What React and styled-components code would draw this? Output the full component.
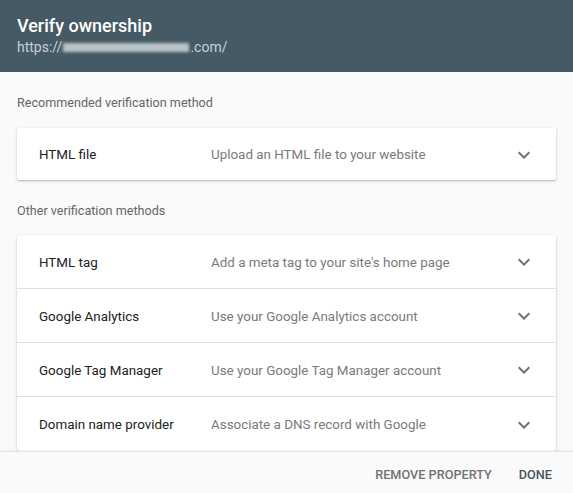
import React from "react";
import styled, { createGlobalStyle } from "styled-components";

const GlobalStyle = createGlobalStyle`
  html, body {
    margin: 0;
    padding: 0;
    background: #fafafa;
    font-family: Roboto, "Liberation Sans", Arial, sans-serif;
  }
`;

const Dialog = styled.div`
  width: 573px;
  height: 493px;
  display: flex;
  flex-direction: column;
  overflow: hidden;
  background: #fafafa;
`;

const Header = styled.header`
  height: 72px;
  flex-shrink: 0;
  box-sizing: border-box;
  padding: 15px 17px 0;
  background: #455a64;
`;

const Title = styled.h1`
  margin: 0;
  font-size: 18px;
  font-weight: 500;
  line-height: 22px;
  color: #ffffff;
`;

const Url = styled.div`
  display: flex;
  align-items: center;
  font-size: 14px;
  line-height: 20px;
  color: rgba(255, 255, 255, 0.72);
`;

const Blur = styled.span`
  display: inline-block;
  width: 126px;
  height: 9px;
  margin: 0 1px;
  background: #b9c3c8;
  filter: blur(1.5px);
`;

const Body = styled.main`
  flex: 1;
  overflow: hidden;
  padding: 0 17px;
`;

const SectionLabel = styled.div`
  font-size: 12.6px;
  line-height: 20px;
  color: #666666;
  margin: ${(p) => p.$top}px 0 ${(p) => p.$bottom}px;
`;

const Card = styled.div`
  background: #ffffff;
  border-radius: 2px;
  box-shadow: 0 1px 3px rgba(0, 0, 0, 0.22), 0 1px 1px rgba(0, 0, 0, 0.08);
`;

const Row = styled.div`
  box-sizing: border-box;
  display: grid;
  grid-template-columns: 172px 1fr 24px;
  align-items: center;
  height: ${(p) => p.$h}px;
  padding: 1px 20px 0 22px;
  border-bottom: ${(p) => (p.$last ? "none" : "1px solid #e0e0e0")};
`;

const Method = styled.span`
  font-size: 13.4px;
  color: #212121;
`;

const Desc = styled.span`
  font-size: 13.4px;
  color: #7a7a7a;
`;

const Chevron = styled.svg`
  width: 24px;
  height: 24px;
  fill: #707070;
`;

const Footer = styled.footer`
  box-sizing: border-box;
  height: 42px;
  flex-shrink: 0;
  display: flex;
  justify-content: flex-end;
  align-items: center;
  gap: 27px;
  padding: 3px 21px 0 0;
  background: #fafafa;
  border-top: 1px solid #e3e3e3;
  box-shadow: 0 -1px 2px rgba(0, 0, 0, 0.05);
  position: relative;
`;

const Button = styled.button`
  border: none;
  background: none;
  padding: 0;
  font-family: inherit;
  font-size: 12.7px;
  font-weight: 500;
  text-transform: uppercase;
  color: ${(p) => (p.$primary ? "#46555d" : "#727272")};
  cursor: pointer;
`;

const ExpandIcon = () => (
  <Chevron viewBox="0 0 24 24">
    <path d="M16.59 8.59L12 13.17 7.41 8.59 6 10l6 6 6-6z" />
  </Chevron>
);

const others = [
  ["HTML tag", "Add a meta tag to your site's home page"],
  ["Google Analytics", "Use your Google Analytics account"],
  ["Google Tag Manager", "Use your Google Tag Manager account"],
  ["Domain name provider", "Associate a DNS record with Google"],
];

export default function App() {
  return (
    <>
      <GlobalStyle />
      <Dialog>
        <Header>
          <Title>Verify ownership</Title>
          <Url>
            https://<Blur />.com/
          </Url>
        </Header>
        <Body>
          <SectionLabel $top={21} $bottom={15}>
            Recommended verification method
          </SectionLabel>
          <Card>
            <Row $h={52} $last>
              <Method>HTML file</Method>
              <Desc>Upload an HTML file to your website</Desc>
              <ExpandIcon />
            </Row>
          </Card>
          <SectionLabel $top={21} $bottom={14}>
            Other verification methods
          </SectionLabel>
          <Card>
            {others.map(([name, desc], i) => (
              <Row key={name} $h={54} $last={i === others.length - 1}>
                <Method>{name}</Method>
                <Desc>{desc}</Desc>
                <ExpandIcon />
              </Row>
            ))}
          </Card>
        </Body>
        <Footer>
          <Button>Remove property</Button>
          <Button $primary>Done</Button>
        </Footer>
      </Dialog>
    </>
  );
}
